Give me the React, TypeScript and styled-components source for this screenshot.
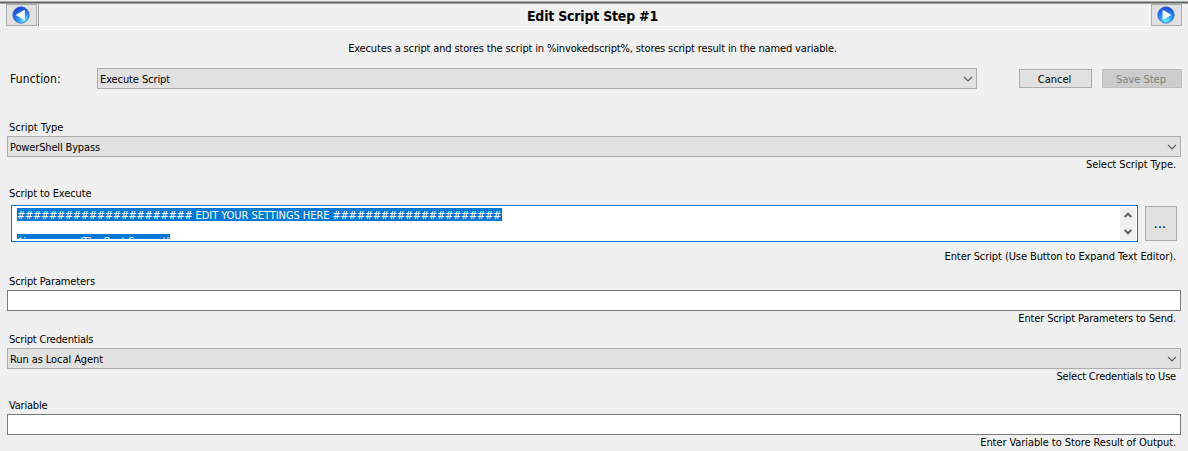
import React from "react";
import styled, { createGlobalStyle } from "styled-components";

const Global = createGlobalStyle`
  *{box-sizing:border-box}
  body{margin:0;background:#f0f0f0;color:#000;overflow:hidden;
    font:11px/13px "DejaVu Sans Condensed","DejaVu Sans",sans-serif;font-stretch:condensed;}
`;
const Page = styled.main`width:1188px;height:451px;display:flex;flex-direction:column;background:#f0f0f0;`;
const TopRule = styled.div`height:3px;margin-top:1px;background:#696969;border-top:1px solid #a5aaa5;border-bottom:1px solid #a0a0a0;`;
const Header = styled.header`display:flex;height:23px;padding:0 6px;`;
const NavButton = styled.button`width:31px;height:22px;padding:0;border:1px solid #adadad;background:#e1e1e1;display:flex;align-items:center;justify-content:center;`;
const TitleBar = styled.h1`flex:1;margin:0 1px;padding-right:3px;border-left:1px solid #a0a0a0;border-right:1px solid #fff;border-bottom:1px solid #fff;
  font-size:14px;line-height:24px;font-weight:bold;text-align:center;height:23px;`;
const Text = styled.span<{ $s?: number; $size?: number }>`display:inline-block;white-space:pre;letter-spacing:${p => p.$s ?? 0}px;font-size:${p => p.$size ?? 11}px;`;
const Description = styled.p`margin:15px 0 0;height:13px;padding-right:3px;text-align:center;`;
const FunctionRow = styled.div`display:flex;margin-top:13px;height:21px;padding:0 6px 0 10px;align-items:center;`;
const FunctionLabel = styled.label`width:87px;padding-top:1px;`;
const Select = styled.div<{ $w: number }>`width:${p => p.$w}px;height:21px;border:1px solid #adadad;background:#e1e1e1;display:flex;align-items:center;justify-content:space-between;padding:1px 3px 0 2px;`;
const PushButton = styled.button<{ $w: number; $x: number }>`width:${p => p.$w}px;height:19px;margin:0 0 0 ${p => p.$x}px;padding:1px 2px 0 0;border:1px solid #adadad;background:#e1e1e1;color:#000;font:inherit;
  &:disabled{border-color:#bfbfbf;background:#ccc;color:#838383;}`;
const Field = styled.section<{ $top: number }>`margin-top:${p => p.$top}px;padding:0 7px;`;
const FieldLabel = styled.label<{ $gap?: number }>`display:block;height:13px;margin:0 0 ${p => p.$gap ?? 2}px 2px;`;
const Help = styled.div<{ $gap?: number }>`height:13px;margin:${p => p.$gap ?? 1}px 5px 0 0;text-align:right;`;
const Input = styled.input`display:block;width:1174px;height:21px;border:1px solid #7a7a7a;background:#fff;padding:0 3px;`;
const EditorRow = styled.div`display:flex;align-items:center;gap:7px;padding-left:4px;`;
const Editor = styled.div`width:1127px;height:37px;border:1px solid #0078d7;background:#fff;display:flex;justify-content:space-between;padding:1px 1px 1px 5px;`;
const Lines = styled.div`height:31px;margin-top:1px;overflow:hidden;color:#fff;`;
const Line = styled.div`height:13px;`;
const Marked = styled.span<{ $w: number }>`display:block;width:${p => p.$w}px;height:13px;padding-top:1px;background:#0078d7;white-space:pre;overflow:hidden;`;
const ScrollBar = styled.div`width:16px;height:33px;background:#f0f0f0;display:flex;flex-direction:column;justify-content:space-between;align-items:center;padding:5px 0;`;
const MoreButton = styled.button`width:32px;height:35px;padding:1px 2px 0 0;border:1px solid #adadad;background:#e1e1e1;color:#000;font:inherit;`;

const Chevron = () => <svg width="10" height="6" viewBox="0 0 10 6"><path d="M1 .8L5 4.8 9 .8" fill="none" stroke="#555" strokeWidth="1.2" /></svg>;
const Arrow = ({ up }: { up?: boolean }) => <svg width="8" height="6" viewBox="0 0 8 6"><path d={up ? "M.7 5L4 1.7 7.3 5" : "M.7 1L4 4.3 7.3 1"} fill="none" stroke="#606060" strokeWidth="2" /></svg>;
const NavIcon = ({ back }: { back?: boolean }) => (
  <svg width="19" height="18" viewBox="0 0 19 18">
    <defs><radialGradient id={back ? "b" : "n"} cx={back ? ".7" : ".5"} cy=".85" r=".85"><stop offset="0" stopColor="#5ff0ff" /><stop offset=".45" stopColor="#2f98f8" /><stop offset="1" stopColor="#1740d8" /></radialGradient></defs>
    <circle cx="9" cy="9" r="8.2" fill={`url(#${back ? "b" : "n"})`} stroke="#4a68cc" strokeWidth=".8" />
    <path d={back ? "M12.8 3.8v10.4L3.6 9z" : "M5.6 3.8v10.2L14.4 8.9z"} fill="#fff" />
  </svg>
);

export default function App() {
  return <><Global /><Page>
    <TopRule />
    <Header><NavButton><NavIcon back /></NavButton><TitleBar><Text $size={14} $s={-.22}>Edit Script Step #1</Text></TitleBar><NavButton><NavIcon /></NavButton></Header>
    <Description><Text $s={-.145}>Executes a script and stores the script in %invokedscript%, stores script result in the named variable.</Text></Description>
    <FunctionRow><FunctionLabel><Text $size={12} $s={.15}>Function:</Text></FunctionLabel>
      <Select $w={880}><Text $s={-.1}>Execute Script</Text><Chevron /></Select>
      <PushButton $w={73} $x={42}><Text>Cancel</Text></PushButton><PushButton $w={80} $x={10} disabled><Text>Save Step</Text></PushButton></FunctionRow>
    <Field $top={32}><FieldLabel><Text>Script Type</Text></FieldLabel><Select $w={1174}><Text $s={-.15}>PowerShell Bypass</Text><Chevron /></Select><Help><Text $s={-.06}>Select Script Type.</Text></Help></Field>
    <Field $top={16}><FieldLabel $gap={5}><Text $s={-.12}>Script to Execute</Text></FieldLabel>
      <EditorRow><Editor><Lines>
        <Line><Marked $w={485}><Text $s={-.32}>######################</Text><Text $s={-.05}> EDIT YOUR SETTINGS HERE </Text><Text $s={-.27}>#####################</Text></Marked></Line>
        <Line />
        <Line><Marked $w={153}><Text>$iconname=</Text><Text $s={-.12}>'The Best Support'</Text></Marked></Line>
      </Lines><ScrollBar><Arrow up /><Arrow /></ScrollBar></Editor><MoreButton><Text $size={14} $s={.2}>...</Text></MoreButton></EditorRow>
      <Help $gap={8}><Text $s={-.09}>Enter Script (Use Button to Expand Text Editor).</Text></Help></Field>
    <Field $top={12}><FieldLabel><Text $s={-.15}>Script Parameters</Text></FieldLabel><Input /><Help><Text $s={-.15}>Enter Script Parameters to Send.</Text></Help></Field>
    <Field $top={8}><FieldLabel><Text $s={-.2}>Script Credentials</Text></FieldLabel><Select $w={1174}><Text $s={-.08}>Run as Local Agent</Text><Chevron /></Select><Help><Text $s={-.2}>Select Credentials to Use</Text></Help></Field>
    <Field $top={16}><FieldLabel><Text $s={-.2}>Variable</Text></FieldLabel><Input /><Help><Text $s={-.08}>Enter Variable to Store Result of Output.</Text></Help></Field>
  </Page></>;
}
